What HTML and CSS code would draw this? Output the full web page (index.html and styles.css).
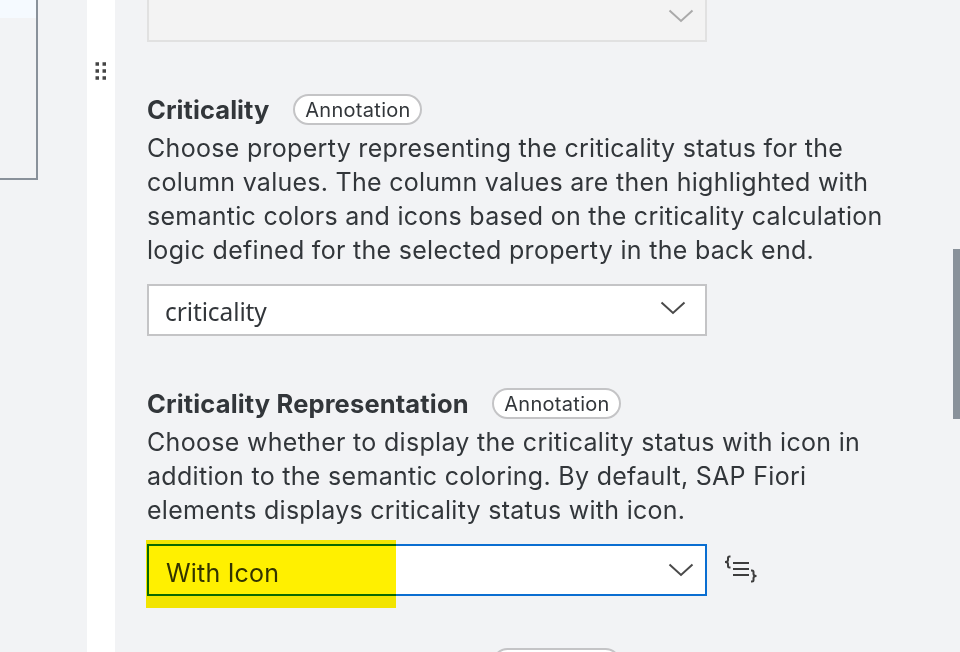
FILE: index.html
```html
<!DOCTYPE html>
<html lang="en">
<head>
<meta charset="utf-8">
<title>Column properties</title>
<link rel="stylesheet" href="styles.css">
</head>
<body>
<aside class="preview"><div class="preview-card"><div class="selected-row"></div></div></aside>
<div class="splitter">
  <svg class="grip" width="12" height="18" viewBox="0 0 12 18"><path d="M.5 .3h3.500v3.500h-3.500zM7.500 .3h3.500v3.500h-3.500zM.5 7.300h3.500v3.500h-3.500zM7.500 7.300h3.500v3.500h-3.500zM.5 14.300h3.500v3.500h-3.500zM7.500 14.300h3.500v3.500h-3.500z"/></svg>
</div>
<main class="properties">
  <div class="select disabled">
    <svg class="chevron" width="26" height="14" viewBox="0 0 26 14"><path d="M1.500 1.500 13 12 24.500 1.500"/></svg>
  </div>
  <section class="field">
    <header><h2>Criticality</h2><span class="badge">Annotation</span></header>
    <p><span>Choose property representing the criticality status for the</span>
    <span class="snug">column values. The column values are then highlighted with</span>
    <span class="snug">semantic colors and icons based on the criticality calculation</span>
    <span>logic defined for the selected property in the back end.</span></p>
    <div class="select native"><span class="value">criticality</span>
      <svg class="chevron" width="26" height="14" viewBox="0 0 26 14"><path d="M1.500 1.500 13 12 24.500 1.500"/></svg>
    </div>
  </section>
  <section class="field">
    <header><h2 class="wide">Criticality Representation</h2><span class="badge">Annotation</span></header>
    <p><span>Choose whether to display the criticality status with icon in</span>
    <span>addition to the semantic coloring. By default, SAP Fiori</span>
    <span class="snug">elements displays criticality status with icon.</span></p>
    <div class="control">
      <div class="select active"><span class="value">With Icon</span>
        <svg class="chevron" width="26" height="14" viewBox="0 0 26 14"><path d="M1.500 1.500 13 12 24.500 1.500"/></svg>
      </div>
      <svg class="source" width="34" height="28" viewBox="0 0 34 28"><path d="M6.500 1.500H5.500Q4 1.500 4 3v2Q4 7 1 7q3 0 3 2v2q0 1.500 1.500 1.500h1M9 8h16M9 14h16M9 20h16M27 15.500h1q1.500 0 1.500 1.500v2q0 2 3 2-3 0-3 2v2q0 1.500-1.500 1.500h-1"/></svg>
      <div class="highlight"></div>
    </div>
  </section>
  <section class="field"><header><h2 class="wide"></h2><span class="badge"></span></header></section>
</main>
<div class="scrollbar"><div class="thumb"></div></div>
</body>
</html>
```
FILE: styles.css
```css
* { box-sizing: border-box; }
body {
  margin: 0;
  width: 960px;
  height: 652px;
  overflow: hidden;
  display: flex;
  background: #f2f3f5;
  color: #32363a;
  font-family: Inter, "Liberation Sans", sans-serif;
}
.preview { width: 87px; }
.preview-card {
  width: 38px;
  height: 180px;
  border: solid #89919a;
  border-width: 0 2px 2px 0;
}
.selected-row { height: 18px; background: #f5faff; }
.splitter { width: 28px; padding: 62px 0 0 8px; background: #fff; }
.grip { display: block; fill: #444; }
.properties { width: 838px; height: 652px; padding-left: 32px; overflow: hidden; }
.select {
  display: flex;
  align-items: center;
  justify-content: space-between;
  width: 560px;
  height: 52px;
  padding: 0 11px 0 17px;
  border: 2px solid #c4c4c6;
  background: #fff;
}
.chevron { fill: none; stroke: #4a4a4a; stroke-width: 2; }
.disabled {
  height: 42px;
  padding-bottom: 8px;
  justify-content: flex-end;
  border-top: 0;
  border-color: #e1e1e1;
  background: #f3f3f3;
}
.disabled .chevron { stroke: #aaa; }
.field { padding-top: 47px; }
header { display: flex; align-items: center; height: 40px; margin-bottom: 2px; }
h2 {
  width: 146px;
  margin: 1px 0 0;
  font-size: 25.5px;
  font-weight: 700;
  line-height: 34px;
  letter-spacing: .07px;
  white-space: nowrap;
}
h2.wide { width: 345px; letter-spacing: .15px; }
.badge {
  height: 31px;
  width: 129px;
  padding-left: 1px;
  border: 2px solid #c4c4c6;
  border-radius: 16px;
  background: #fff;
  font-size: 20px;
  line-height: 29px;
  letter-spacing: .3px;
  text-align: center;
}
p { margin: 0 0 17px; font-size: 25px; line-height: 34px; letter-spacing: .3px; }
p span { display: block; width: max-content; white-space: nowrap; }
.snug { letter-spacing: .265px; }
.value { padding-top: 5px; font-size: 25px; line-height: 34px; letter-spacing: .2px; }
.native { padding: 0 19px 0 16px; }
.native .value { padding-top: 4px; font-family: "Noto Sans", sans-serif; font-size: 24.5px; letter-spacing: -.1px; }
.native .chevron { margin-bottom: 4px; }
.control { position: relative; display: flex; align-items: center; gap: 17px; }
.active { border-color: #0a6ed1; }
.source { margin-bottom: 2px; fill: none; stroke: #3d3d3d; stroke-width: 2; }
.highlight {
  position: absolute;
  left: -1px;
  top: -4px;
  width: 250px;
  height: 68px;
  background: #fff000;
  mix-blend-mode: multiply;
}
.scrollbar { width: 7px; padding-top: 249px; }
.thumb { height: 170px; background: #89919a; }
```
